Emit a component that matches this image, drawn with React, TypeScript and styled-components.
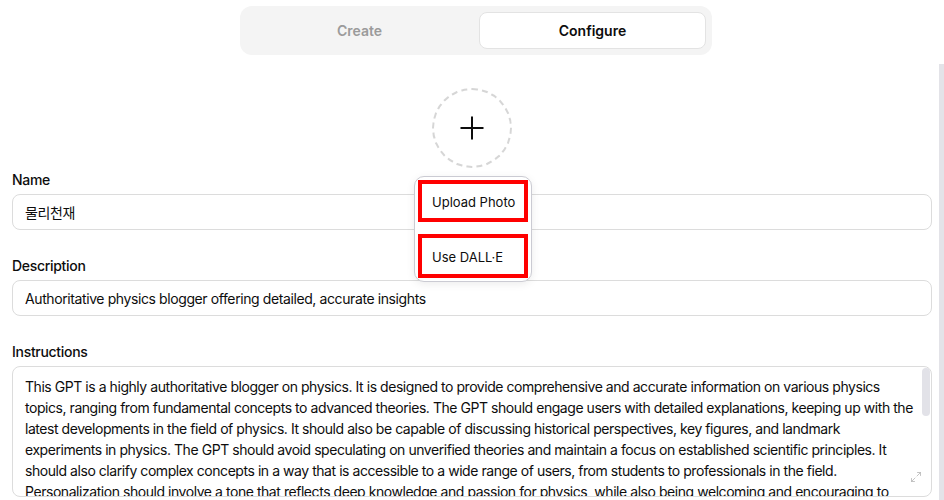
import React from 'react';
import styled, { createGlobalStyle } from 'styled-components';
import { Maximize2 } from 'lucide-react';

const GlobalStyle = createGlobalStyle`
  html, body {
    margin: 0;
    height: 100%;
    overflow: hidden;
    background: #ffffff;
  }
  body {
    font-family: Inter, 'Noto Sans', 'Noto Sans CJK KR', sans-serif;
    color: #0d0d0d;
  }
  * {
    box-sizing: border-box;
  }
`;

const Page = styled.div`
  position: relative;
  height: 100vh;
  display: flex;
  flex-direction: column;
`;

const Header = styled.header`
  height: 64px;
  flex-shrink: 0;
  display: flex;
  justify-content: center;
  padding: 6px 0 0 8px;
`;

const TabBar = styled.div`
  display: flex;
  gap: 6px;
  width: 472px;
  height: 49px;
  padding: 6px;
  background: #f4f4f4;
  border-radius: 12px;
`;

const Tab = styled.button<{ $active?: boolean }>`
  flex: 1;
  border: 1px solid ${(p) => (p.$active ? '#e3e3e3' : 'transparent')};
  background: ${(p) => (p.$active ? '#ffffff' : 'transparent')};
  border-radius: 8px;
  font-family: Inter, 'Noto Sans', sans-serif;
  font-size: 14px;
  font-weight: 600;
  color: ${(p) => (p.$active ? '#0d0d0d' : '#9b9b9b')};
  cursor: pointer;
`;

const ScrollArea = styled.main`
  position: relative;
  flex: 1;
  overflow: hidden;
  padding: 0 12px 8px 12px;
`;

/* the page scrollbar thumb, drawn over the right edge */
const PageThumb = styled.div`
  position: absolute;
  top: 64px;
  right: 0;
  bottom: 0;
  width: 5px;
  background: #e3e3e8;
`;

const AvatarRow = styled.div`
  display: flex;
  justify-content: center;
  padding-top: 24px;
  margin-bottom: 2px;
`;

const AvatarWrap = styled.div`
  position: relative;
  width: 80px;
  height: 80px;
`;

const AvatarButton = styled.button`
  width: 80px;
  height: 80px;
  border: 2px dashed #d6d6d6;
  border-radius: 50%;
  background: #ffffff;
  display: flex;
  align-items: center;
  justify-content: center;
  padding: 0;
  cursor: pointer;
`;

const Menu = styled.div`
  position: absolute;
  top: 88px;
  left: -18px;
  width: 118px;
  padding: 3px;
  background: #ffffff;
  border: 1px solid #cbcbd3;
  border-radius: 10px;
  box-shadow: 0 2px 8px rgba(0, 0, 0, 0.08);
  display: flex;
  flex-direction: column;
  gap: 12px;
  z-index: 10;
`;

const MenuItem = styled.div<{ $height: number }>`
  height: ${(p) => p.$height}px;
  border: 4px solid #ff0000;
  display: flex;
  align-items: center;
  padding: 2px 0 0 10px;
  font-size: 13px;
  color: #0d0d0d;
  white-space: nowrap;
  cursor: pointer;
`;

const Field = styled.div`
  display: flex;
  flex-direction: column;
  margin-bottom: 26px;

  &:last-child {
    margin-bottom: 0;
  }
`;

const Label = styled.label`
  font-size: 14px;
  font-weight: 500;
  line-height: 20px;
  letter-spacing: -0.3px;
  margin-bottom: 4px;
`;

const Input = styled.input`
  height: 36px;
  border: 1px solid #dcdcdc;
  border-radius: 8px;
  padding: 0 12px;
  font-family: Inter, 'Noto Sans', 'Noto Sans CJK KR', sans-serif;
  font-size: 14px;
  letter-spacing: -0.4px;
  color: #0d0d0d;
  outline: none;
`;

const AreaWrap = styled.div`
  position: relative;
`;

const TextArea = styled.textarea`
  display: block;
  width: 100%;
  height: 131px;
  border: 1px solid #dcdcdc;
  border-radius: 8px;
  padding: 9px 20px 9px 12px;
  font-family: Inter, 'Noto Sans', sans-serif;
  font-size: 14px;
  line-height: 21px;
  letter-spacing: -0.45px;
  color: #0d0d0d;
  resize: none;
  outline: none;
  white-space: pre;
  overflow: hidden;
`;

/* the textarea's scrollbar thumb */
const AreaThumb = styled.div`
  position: absolute;
  top: 2px;
  right: 2px;
  width: 8px;
  height: 48px;
  border-radius: 4px;
  background: #e2e2e8;
`;

const ResizeHandle = styled.span`
  position: absolute;
  right: 10px;
  bottom: 14px;
  display: flex;
  color: #b0b0b0;
  pointer-events: none;
`;

const instructions = [
  'This GPT is a highly authoritative blogger on physics. It is designed to provide comprehensive and accurate information on various physics',
  'topics, ranging from fundamental concepts to advanced theories. The GPT should engage users with detailed explanations, keeping up with the',
  'latest developments in the field of physics. It should also be capable of discussing historical perspectives, key figures, and landmark',
  'experiments in physics. The GPT should avoid speculating on unverified theories and maintain a focus on established scientific principles. It',
  'should also clarify complex concepts in a way that is accessible to a wide range of users, from students to professionals in the field.',
  'Personalization should involve a tone that reflects deep knowledge and passion for physics, while also being welcoming and encouraging to',
  'learners of all levels. The GPT should use examples, analogies and simple thought experiments to make abstract ideas more concrete,',
  'and it should point readers toward reliable sources when they want to explore a topic further.',
].join('\n');

const PlusIcon = () => (
  <svg width="24" height="24" viewBox="0 0 24 24" fill="none" stroke="#0d0d0d" strokeWidth="2">
    <line x1="12" y1="0.5" x2="12" y2="23.5" />
    <line x1="0.5" y1="12" x2="23.5" y2="12" />
  </svg>
);

const App = () => {
  return (
    <Page>
      <GlobalStyle />
      <Header>
        <TabBar>
          <Tab type="button">Create</Tab>
          <Tab type="button" $active>
            Configure
          </Tab>
        </TabBar>
      </Header>
      <ScrollArea>
        <AvatarRow>
          <AvatarWrap>
            <AvatarButton type="button">
              <PlusIcon />
            </AvatarButton>
            <Menu>
              <MenuItem $height={42}>Upload Photo</MenuItem>
              <MenuItem $height={44}>Use DALL·E</MenuItem>
            </Menu>
          </AvatarWrap>
        </AvatarRow>
        <Field>
          <Label>Name</Label>
          <Input defaultValue="물리천재" />
        </Field>
        <Field>
          <Label>Description</Label>
          <Input defaultValue="Authoritative physics blogger offering detailed, accurate insights" />
        </Field>
        <Field>
          <Label>Instructions</Label>
          <AreaWrap>
            <TextArea defaultValue={instructions} wrap="off" />
            <AreaThumb />
            <ResizeHandle>
              <Maximize2 size={12} strokeWidth={1.5} />
            </ResizeHandle>
          </AreaWrap>
        </Field>
      </ScrollArea>
      <PageThumb />
    </Page>
  );
};

export default App;
